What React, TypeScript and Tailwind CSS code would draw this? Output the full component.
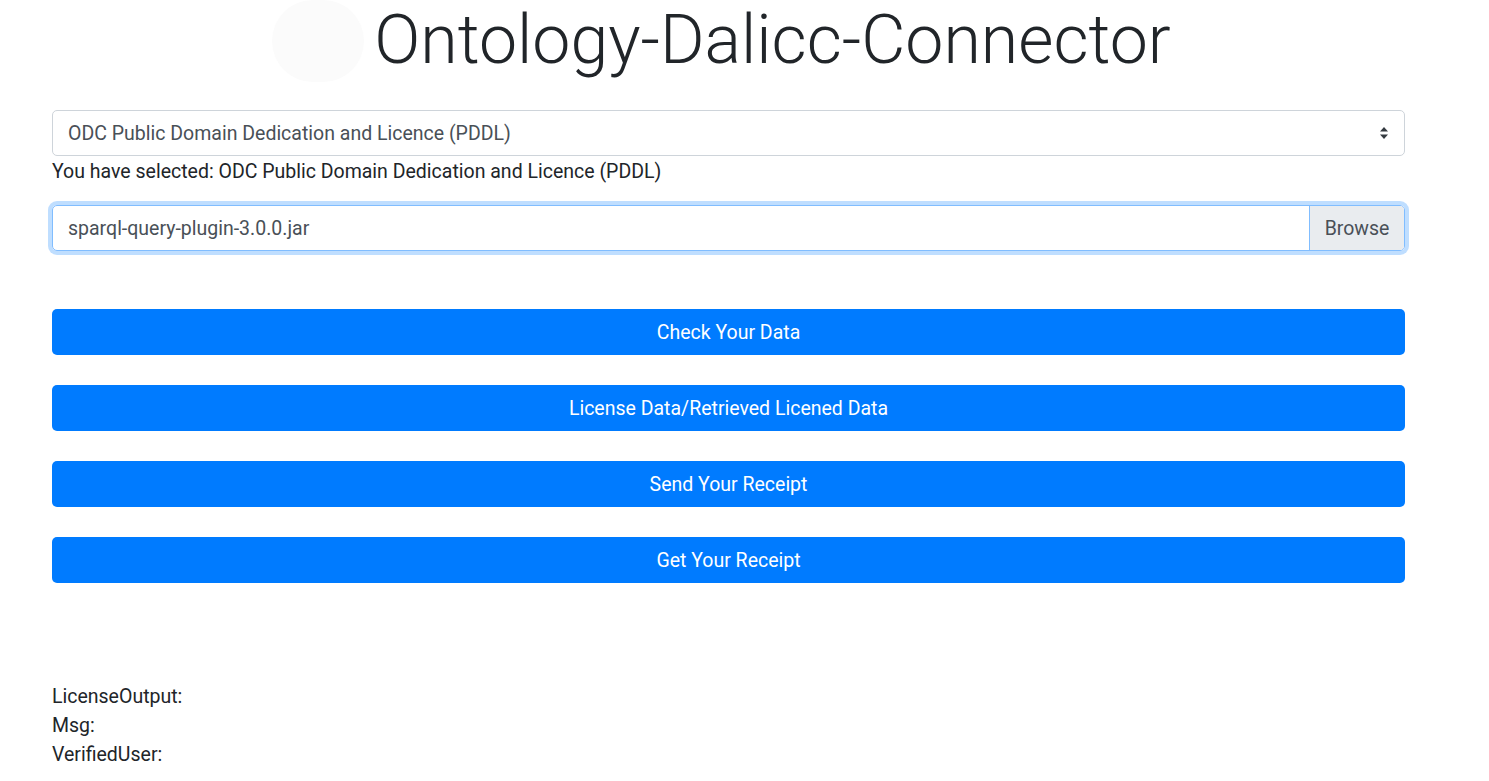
import React from "react";

export default function App() {
  const buttons = [
    "Check Your Data",
    "License Data/Retrieved Licened Data",
    "Send Your Receipt",
    "Get Your Receipt",
  ];
  return (
    <div
      className="min-h-[781px] w-[1489px] bg-white text-[#212529]"
      style={{ fontFamily: "Roboto, 'Liberation Sans', sans-serif" }}
    >
      <div className="ml-[52px] w-[1353px]">
        <div className="flex items-center justify-center">
          <div className="h-[82px] w-[92px] rounded-full bg-[#fbfbfb] mr-[10px] -ml-[14px]" />
          <h1 className="text-[68px] font-light leading-[1.2] text-[#212529]">
            Ontology-Dalicc-Connector
          </h1>
        </div>

        <div className="mt-[28px] flex h-[46px] items-center justify-between rounded-[5px] border border-[#ced4da] pl-[15px] pr-[15px] pt-[2px] text-[19.5px] text-[#495057]">
          <span>ODC Public Domain Dedication and Licence (PDDL)</span>
          <svg width="10" height="14" viewBox="0 0 10 14" className="-mt-[2px]">
            <path d="M5 1 L9 5.5 L1 5.5 Z" fill="#343a40" />
            <path d="M5 13 L9 8.5 L1 8.5 Z" fill="#343a40" />
          </svg>
        </div>
        <div className="pt-[1px] text-[19.5px] leading-[29px]">
          You have selected: ODC Public Domain Dedication and Licence (PDDL)
        </div>

        <div className="mt-[19px] flex h-[46px] rounded-[5px] border border-[#80bdff] pt-[2px] shadow-[0_0_0_4px_rgba(0,123,255,0.25)] text-[19.5px] text-[#495057]">
          <div className="flex flex-1 items-center pl-[15px]">sparql-query-plugin-3.0.0.jar</div>
          <div className="-mt-[2px] flex w-[95px] items-center justify-center rounded-r-[4px] border-l border-[#80bdff] bg-[#e9ecef] pt-[2px]">
            Browse
          </div>
        </div>

        <div className="mt-[58px] flex flex-col gap-[30px]">
          {buttons.map((b) => (
            <div
              key={b}
              className="flex h-[46px] items-center justify-center rounded-[5px] bg-[#007bff] pt-[2px] text-[19.5px] text-white"
            >
              {b}
            </div>
          ))}
        </div>

        <div className="mt-[99px] text-[19.5px] leading-[29px]">
          <div>LicenseOutput:</div>
          <div>Msg:</div>
          <div>VerifiedUser:</div>
        </div>
      </div>
    </div>
  );
}
